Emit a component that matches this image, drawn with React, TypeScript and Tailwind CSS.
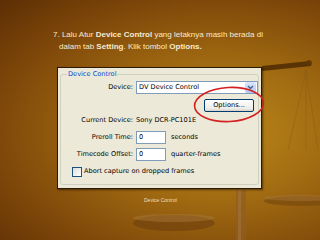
import React from 'react'

const dlg = { fontFamily: '"DejaVu Sans", Verdana, sans-serif' }

const Field: React.FC<{ label: string; children: React.ReactNode; className?: string }> = ({ label, children, className }) => (
  <div className={'flex items-center ' + (className ?? '')}>
    <div className="w-[72px] text-right text-[6.6px] leading-none text-black">{label}</div>
    <div className="ml-[3px] flex items-center">{children}</div>
  </div>
)

const TextBox: React.FC<{ value: string }> = ({ value }) => (
  <div className="flex h-[13px] w-[30px] items-center border border-[#7f9db9] bg-white pl-[2px] text-[6.6px] leading-none">
    {value}
  </div>
)

const Scale: React.FC = () => (
  <svg className="absolute inset-0" width="320" height="240" viewBox="0 0 320 240">
    {/* beam */}
    <path d="M262 66 L310 61 L311 66 L262 71 Z" fill="#4e2a04" opacity="0.85" />
    <circle cx="309" cy="63" r="3" fill="#5e3406" opacity="0.8" />
    {/* strings */}
    <g stroke="#8a5a18" strokeWidth="0.6" opacity="0.7" fill="none">
      <path d="M306 70 L288 150" />
      <path d="M306 70 L318 150" />
      <path d="M306 70 L306 150" />
    </g>
    {/* pole */}
    <rect x="236" y="190" width="10" height="50" fill="#8e5e26" opacity="0.65" />
    <rect x="238" y="190" width="3" height="50" fill="#b08040" opacity="0.4" />
    {/* right pan */}
    <ellipse cx="300" cy="201" rx="36" ry="5" fill="#74460f" opacity="0.6" />
    <ellipse cx="300" cy="198" rx="36" ry="3" fill="#a87838" opacity="0.45" />
    {/* left pan */}
    <ellipse cx="174" cy="223" rx="41" ry="8" fill="#6a3c0c" opacity="0.55" />
    <ellipse cx="174" cy="218" rx="41" ry="4" fill="#a87838" opacity="0.5" />
  </svg>
)

const App: React.FC = () => {
  return (
    <div className="relative h-[240px] w-[320px] overflow-hidden bg-[radial-gradient(ellipse_at_68%_55%,#bc881a_0%,#a26c12_35%,#80490a_70%,#5c2e04_100%)]">
      <Scale />

      <div className="relative flex flex-col">
        <div
          className="pl-[53px] pt-[29px] text-[8px] leading-[12px] text-[#f6ead2]"
          style={{ fontFamily: '"Liberation Sans", Arial, sans-serif' }}
        >
          <div>
            7. Lalu Atur <b>Device Control</b> yang letaknya masih berada di
          </div>
          <div className="pl-[6px]">
            dalam tab <b>Setting</b>. Klik tombol <b>Options.</b>
          </div>
        </div>

        <div
          className="ml-[57px] mt-[14px] h-[122px] w-[205px] border border-[#2e1a04] bg-[#ece9d8] p-[2px] shadow-[1px_1px_2px_rgba(0,0,0,0.5)]"
          style={dlg}
        >
          <div className="relative mt-[4px] h-[111px] rounded-[3px] border border-[#d0d0bf]">
            <div className="absolute -top-[4px] left-[6px] bg-[#ece9d8] px-[1px] text-[6.6px] leading-none text-[#0046d5]">
              Device Control
            </div>

            <Field label="Device:" className="mt-[6px]">
              <div className="flex h-[13px] w-[122px] items-center border border-[#7f9db9] bg-white">
                <div className="flex-1 pl-[2px] text-[6.6px] leading-none">DV Device Control</div>
                <div className="mr-[1px] flex h-[11px] w-[11px] items-center justify-center rounded-[2px] bg-[linear-gradient(#dbe6fd,#b3c8f5)]">
                  <svg width="7" height="5" viewBox="0 0 7 5">
                    <path d="M1 1 L3.5 3.5 L6 1" stroke="#4d6185" strokeWidth="1.4" fill="none" />
                  </svg>
                </div>
              </div>
            </Field>

            <div className="mt-[5px] flex justify-end pr-[4px]">
              <div className="flex h-[13px] w-[50px] items-center justify-center rounded-[2px] border border-[#003c74] bg-[linear-gradient(#ffffff,#ecebe6_80%,#d6d0c5)] text-[6.6px] leading-none">
                Options...
              </div>
            </div>

            <Field label="Current Device:" className="mt-[5px]">
              <span className="text-[6.6px] leading-none">Sony DCR-PC101E</span>
            </Field>

            <Field label="Preroll Time:" className="mt-[7px]">
              <TextBox value="0" />
              <span className="ml-[5px] text-[6.6px] leading-none">seconds</span>
            </Field>

            <Field label="Timecode Offset:" className="mt-[4px]">
              <TextBox value="0" />
              <span className="ml-[5px] text-[6.6px] leading-none">quarter-frames</span>
            </Field>

            <div className="ml-[11px] mt-[6px] flex items-center">
              <div className="h-[10px] w-[10px] border border-[#1c5180] bg-[linear-gradient(135deg,#dcdcd7,#ffffff)]" />
              <span className="ml-[2px] text-[6.6px] leading-none">Abort capture on dropped frames</span>
            </div>
          </div>
        </div>

        <div
          className="mt-[9px] pl-[144px] text-[5px] leading-none text-[#f3dfb8]"
          style={{ fontFamily: '"Liberation Sans", Arial, sans-serif' }}
        >
          Device Control
        </div>
      </div>

      <svg className="absolute inset-0" width="320" height="240" viewBox="0 0 320 240">
        <ellipse cx="229" cy="104.5" rx="34.5" ry="17" fill="none" stroke="#d42020" strokeWidth="1.6" transform="rotate(-3 229 104.5)" />
      </svg>
    </div>
  )
}

export default App
